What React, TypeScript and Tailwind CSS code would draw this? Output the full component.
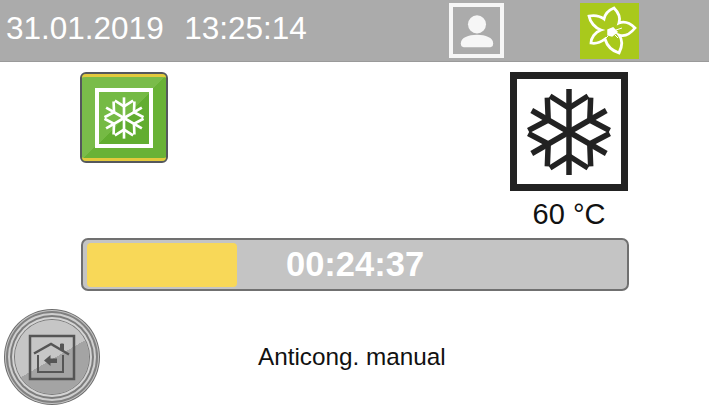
function Flake({ className, width }: { className: string; width: number }) {
  return (
    <svg viewBox="-50 -50 100 100" className={className} fill="none" stroke="currentColor" strokeWidth={width}>
      {[0, 60, 120, 180, 240, 300].map((a) => (
        <g key={a} transform={`rotate(${a})`}>
          <path d="M0 0V-43" />
          <path d="M-19 -36L0 -24L19 -36" />
        </g>
      ))}
    </svg>
  )
}

function Flower() {
  return (
    <svg viewBox="0 0 59 56" className="h-full w-full" fill="none" stroke="white" strokeWidth="2.8" strokeLinejoin="miter">
      <path d="M24 16C25 11 29 7 34 5C38 9 41 14 39 20C44 18 50 20 55 25C51 30 45 34 39 32C43 37 42 44 39 50C33 48 27 43 25 36C21 39 16 41 11 40C11 35 15 29 21 27C15 25 10 19 9 13C14 12 20 13 24 16Z" />
      <path d="M28 27L33 25L37 29L32 33L28 32Z" fill="white" strokeWidth="1.5" />
      <path d="M36 27L42 25M35 32L38 35M28 33L26 35" strokeWidth="1" />
    </svg>
  )
}

function HomeIcon() {
  return (
    <svg viewBox="0 0 54 54" className="h-full w-full" fill="none" stroke="#555555">
      <rect x="5" y="6" width="44" height="43" strokeWidth="2.5" />
      <path d="M9 23.5L26 14L44 24.5" strokeWidth="2.5" />
      <path d="M13 25V42H38V25" strokeWidth="2" />
      <path d="M35.5 19V14H38.5V21" fill="#555555" strokeWidth="1" />
      <path d="M19 30.5L25.5 25V28.5H32V33H25.5V36Z" fill="#555555" stroke="none" />
    </svg>
  )
}

export default function App() {
  return (
    <div className="flex h-[409px] w-[709px] flex-col overflow-hidden bg-white font-['Liberation_Sans',sans-serif]">
      <div className="flex h-[62px] items-center border-b border-[#9a9a9a] bg-[#ababab] pl-[6px]">
        <span className="mb-[3px] w-[443px] whitespace-pre text-[31.5px] text-white [word-spacing:1.5px]">31.01.2019  13:25:14</span>
        <div className="flex h-[55px] w-[55px] items-center justify-center border-4 border-[#f6f6f6]">
          <svg viewBox="0 0 40 40" className="h-[38px] w-[38px]" fill="#f6f6f6">
            <circle cx="20" cy="13" r="9.5" />
            <path d="M3 33C3 27 11 24 20 24C29 24 37 27 37 33C37 36 36 37 34 37H6C4 37 3 36 3 33Z" />
          </svg>
        </div>
        <div className="ml-[76px] h-[56px] w-[59px] bg-[#a9c91c]">
          <Flower />
        </div>
      </div>

      <div className="flex items-start pl-[80px] pt-[10px]">
        <div className="h-[91px] w-[88px] rounded-[6px] border-2 border-[#55585c] bg-[#6bb338]">
          <div className="flex h-full w-full items-center justify-center rounded-[4px] border-y-[3px] border-[#e3c93c] bg-[linear-gradient(135deg,#7abc4a_50%,#69b236_50%)]">
            <div className="flex h-[60px] w-[58px] items-center justify-center border-4 border-white bg-[linear-gradient(135deg,#75ba44_50%,#62ad30_50%)]">
              <Flake className="h-[48px] w-[48px] text-white" width={5.5} />
            </div>
          </div>
        </div>
        <div className="ml-[342px] flex flex-col items-center">
          <div className="flex h-[119px] w-[118px] items-center justify-center border-[7px] border-[#222222] bg-white">
            <Flake className="h-[100px] w-[100px] text-[#222222]" width={5.5} />
          </div>
          <span className="mt-[8px] text-[29px] leading-[30px] text-[#111111]">60 °C</span>
        </div>
      </div>

      <div className="ml-[81px] mt-[9px] flex h-[53px] w-[548px] items-center rounded-[7px] border-2 border-[#707070] bg-[#c4c4c4] pl-[4px]">
        <div className="h-[44px] w-[150px] rounded-[4px] bg-[#f8d858]" />
        <span className="ml-[49px] text-[34.5px] font-bold leading-none text-white">00:24:37</span>
      </div>

      <div className="mt-[18px] flex items-center pl-[4px]">
        <div className="flex h-[96px] w-[96px] items-center justify-center">
          <div className="flex h-[74px] w-[74px] items-center justify-center rounded-full bg-[linear-gradient(150deg,#c6c6c6_52%,#a4a4a4_52%)] shadow-[0_0_0_1px_#777777,0_0_0_3px_#d4d4d4,0_0_0_5px_#7c7c7c,0_0_0_7px_#cfcfcf,0_0_0_9px_#808080,0_0_0_10px_#c4c4c4,0_0_0_11px_#6c6c6c]">
            <div className="h-[54px] w-[54px]">
              <HomeIcon />
            </div>
          </div>
        </div>
        <span className="ml-[158px] text-[24.3px] text-[#111111]">Anticong. manual</span>
      </div>
    </div>
  )
}
